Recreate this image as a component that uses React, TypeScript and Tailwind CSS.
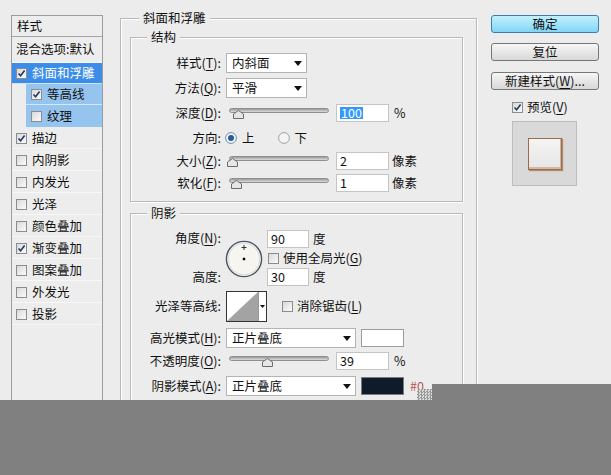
import React from 'react';

const Check = ({ checked = false }: { checked?: boolean }) => (
  <span className="inline-flex w-[11px] h-[11px] shrink-0 items-center justify-center border border-[#8c8c8c] bg-linear-to-br from-[#d9d9d9] to-[#fbfbfb]">
    {checked && (
      <svg width="9" height="9" viewBox="0 0 9 9">
        <path d="M1.5 4.5 L3.6 6.8 L7.6 1.5" fill="none" stroke="#22386a" strokeWidth="1.6" />
      </svg>
    )}
  </span>
);

const Radio = ({ checked = false }: { checked?: boolean }) => (
  <svg width="12" height="12" viewBox="0 0 12 12" className="shrink-0">
    <circle cx="6" cy="6" r="5.4" fill="#f4f4f4" stroke={checked ? '#6d8fb3' : '#a2a2a2'} strokeWidth="1" />
    {checked && <circle cx="6" cy="6" r="3" fill="#2a5b92" />}
  </svg>
);

const Arrow = () => (
  <svg width="8" height="5" viewBox="0 0 8 5" className="shrink-0">
    <path d="M0 0 H8 L4 5 Z" fill="#111" />
  </svg>
);

// access key letter, underlined as in the dialog
const K = ({ children }: { children: React.ReactNode }) => (
  <span className="underline underline-offset-[2px]">{children}</span>
);

const Select = ({ value, w }: { value: string; w: string }) => (
  <div className={`${w} ml-[5px] h-[20px] flex items-center justify-between border border-[#b4b4b4] bg-white pl-[5px] pr-[4px]`}>
    <span>{value}</span>
    <Arrow />
  </div>
);

const Slider = ({ pos }: { pos: string }) => (
  <div className="relative w-[100px] h-[22px] ml-[8px] shrink-0">
    <div className="absolute left-0 right-0 top-[6px] h-[5px] rounded-full border border-[#8e8e8e] bg-linear-to-b from-[#9a9a9a] to-[#dedede]" />
    <svg width="11" height="9" viewBox="0 0 11 9" className={`absolute top-[8px] ${pos}`}>
      <path d="M5.5 0.5 L10.5 4 V8.5 H0.5 V4 Z" fill="#e6e6e6" stroke="#6c6c6c" />
    </svg>
  </div>
);

const Field = ({ children, w = 'w-[53px]' }: { children: React.ReactNode; w?: string }) => (
  <div className={`${w} h-[18px] flex items-center border border-[#c4c4c4] bg-white pl-[3px] shrink-0`}>{children}</div>
);

const Label = ({ children }: { children: React.ReactNode }) => (
  <div className="w-[90px] shrink-0 text-right">{children}</div>
);

const Button = ({ children, primary = false }: { children: React.ReactNode; primary?: boolean }) => (
  <div
    className={`w-[108px] h-[18px] flex items-center justify-center rounded-[3px] border ${
      primary
        ? 'border-[#3d7ca6] bg-linear-to-b from-[#c2f0fd] to-[#80d6f6]'
        : 'border-[#777] bg-linear-to-b from-[#f6f6f6] to-[#d8d8d8]'
    }`}
  >
    {children}
  </div>
);

const styles = [
  { name: '描边', on: true },
  { name: '内阴影', on: false },
  { name: '内发光', on: false },
  { name: '光泽', on: false },
  { name: '颜色叠加', on: false },
  { name: '渐变叠加', on: true },
  { name: '图案叠加', on: false },
  { name: '外发光', on: false },
  { name: '投影', on: false },
];

export default function App() {
  return (
    <div className="relative w-[611px] h-[475px] overflow-hidden bg-[#ececec] text-[12.5px] leading-none text-[#111] font-['Noto_Sans_CJK_SC','Noto_Sans',sans-serif]">
      <div className="flex pt-[15px]">
        {/* style list */}
        <div className="ml-[11px] w-[92px] h-[400px] shrink-0 flex flex-col border border-[#9c9c9c] bg-[#ededed]">
          <div className="h-[21px] flex items-center pl-[5px] border-b border-[#a4a4a4]">样式</div>
          <div className="h-[26px] flex items-center pl-[4px] border-b border-[#f9f9f9]">混合选项:默认</div>
          <div className="h-[21px] flex items-center gap-[5px] pl-[4px] bg-[#3b8de7] text-white border-b border-[#cfe3f6]">
            <Check checked />
            <span>斜面和浮雕</span>
          </div>
          <div className="ml-[14px] h-[21px] flex items-center gap-[5px] pl-[5px] bg-[#95c4ef] border-b border-[#d6e8f8]">
            <Check checked />
            <span>等高线</span>
          </div>
          <div className="ml-[14px] h-[22px] flex items-center gap-[5px] pl-[5px] bg-[#95c4ef]">
            <Check />
            <span>纹理</span>
          </div>
          {styles.map((s) => (
            <div key={s.name} className="h-[22px] flex items-center gap-[5px] pl-[4px] pt-[2px] border-b border-[#f8f8f8]">
              <Check checked={s.on} />
              <span>{s.name}</span>
            </div>
          ))}
        </div>

        {/* bevel & emboss group */}
        <div className="relative ml-[17px] mt-[3px] w-[357px] h-[400px] shrink-0 border border-[#b8b8b8] shadow-[inset_1px_1px_0_#fff,1px_1px_0_#fff]">
          <span className="absolute left-[18px] -top-[7px] px-[4px] bg-[#ececec]">斜面和浮雕</span>

          {/* structure */}
          <div className="relative mt-[18px] ml-[9px] w-[333px] h-[165px] border border-[#b8b8b8] shadow-[inset_1px_1px_0_#fff,1px_1px_0_#fff] pt-[14px]">
            <span className="absolute left-[16px] -top-[7px] px-[4px] bg-[#ececec]">结构</span>
            <div className="flex items-center h-[22px]">
              <Label>样式(<K>T</K>):</Label>
              <Select value="内斜面" w="w-[81px]" />
            </div>
            <div className="flex items-center h-[22px] mt-[3px]">
              <Label>方法(<K>Q</K>):</Label>
              <Select value="平滑" w="w-[81px]" />
            </div>
            <div className="flex items-center h-[22px] mt-[3px]">
              <Label>深度(<K>D</K>):</Label>
              <Slider pos="left-[4px]" />
              <div className="ml-[7px]">
                <Field>
                  <span className="bg-[#3399ff] text-white px-[1px]">100</span>
                </Field>
              </div>
              <span className="ml-[5px]">%</span>
            </div>
            <div className="flex items-center h-[22px] mt-[3px]">
              <Label>方向:</Label>
              <div className="ml-[4px] flex items-center gap-[5px]">
                <Radio checked />
                <span>上</span>
              </div>
              <div className="ml-[23px] flex items-center gap-[5px]">
                <Radio />
                <span>下</span>
              </div>
            </div>
            <div className="flex items-center h-[22px] mt-[1px]">
              <Label>大小(<K>Z</K>):</Label>
              <Slider pos="-left-[2px]" />
              <div className="ml-[7px]">
                <Field>2</Field>
              </div>
              <span className="ml-[3px]">像素</span>
            </div>
            <div className="flex items-center h-[22px]">
              <Label>软化(<K>F</K>):</Label>
              <Slider pos="left-[2px]" />
              <div className="ml-[7px]">
                <Field>1</Field>
              </div>
              <span className="ml-[3px]">像素</span>
            </div>
          </div>

          {/* shading */}
          <div className="relative mt-[11px] ml-[9px] w-[333px] h-[220px] border border-[#b8b8b8] shadow-[inset_1px_1px_0_#fff,1px_1px_0_#fff] pt-[15px]">
            <span className="absolute left-[16px] -top-[7px] px-[4px] bg-[#ececec]">阴影</span>
            <div className="flex items-start">
              <div className="w-[90px] shrink-0 flex flex-col text-right">
                <div className="h-[18px] flex items-center justify-end">角度(<K>N</K>):</div>
                <div className="h-[21px]" />
                <div className="h-[18px] flex items-center justify-end">高度:</div>
              </div>
              <svg width="38" height="38" viewBox="0 0 38 38" className="ml-[4px] mt-[11px] shrink-0">
                <circle cx="19" cy="19" r="17.6" fill="#f6f5ef" stroke="#4b5661" strokeWidth="1.4" />
                <circle cx="19" cy="19" r="15.8" fill="none" stroke="#d4dae2" strokeWidth="1" />
                <rect x="17.8" y="17.8" width="2.4" height="2.4" fill="#000" />
                <path d="M16.5 7.5 H21.5 M19 5 V10" stroke="#333" strokeWidth="1" />
              </svg>
              <div className="ml-[4px] flex flex-col">
                <div className="h-[18px] mt-[1px] flex items-center">
                  <Field w="w-[42px]">90</Field>
                  <span className="ml-[4px]">度</span>
                </div>
                <div className="h-[20px] flex items-center gap-[4px] pl-[1px]">
                  <Check />
                  <span>使用全局光(<K>G</K>)</span>
                </div>
                <div className="h-[18px] flex items-center">
                  <Field w="w-[42px]">30</Field>
                  <span className="ml-[4px]">度</span>
                </div>
              </div>
            </div>

            <div className="flex items-center mt-[5px] h-[31px]">
              <Label>光泽等高线:</Label>
              <div className="ml-[5px] w-[41px] h-[31px] flex border border-[#333] bg-white shrink-0">
                <svg width="31" height="29" viewBox="0 0 31 29" className="shrink-0">
                  <path d="M0 29 L31 0 V29 Z" fill="#a3a3a3" />
                </svg>
                <div className="flex-1 flex items-center justify-center border-l border-[#9a9a9a]">
                  <svg width="5" height="3" viewBox="0 0 5 3">
                    <path d="M0 0 H5 L2.5 3 Z" fill="#111" />
                  </svg>
                </div>
              </div>
              <div className="ml-[15px] flex items-center gap-[4px]">
                <Check />
                <span>消除锯齿(<K>L</K>)</span>
              </div>
            </div>

            <div className="flex items-center mt-[6px] h-[20px]">
              <Label>高光模式(<K>H</K>):</Label>
              <Select value="正片叠底" w="w-[130px]" />
              <div className="ml-[5px] w-[43px] h-[18px] border border-[#9d9d9d] bg-white" />
            </div>

            <div className="flex items-center mt-[2px] h-[22px]">
              <Label>不透明度(<K>O</K>):</Label>
              <Slider pos="left-[33px]" />
              <div className="ml-[7px]">
                <Field>39</Field>
              </div>
              <span className="ml-[5px]">%</span>
            </div>

            <div className="flex items-center mt-[4px] h-[20px]">
              <Label>阴影模式(<K>A</K>):</Label>
              <Select value="正片叠底" w="w-[130px]" />
              <div className="ml-[5px] w-[43px] h-[18px] border border-[#7c7c7c] bg-[#0f1a2b]" />
              <span className="ml-[6px] text-[#b55555]">#0</span>
            </div>
          </div>
        </div>

        {/* buttons */}
        <div className="ml-[14px] w-[108px] shrink-0 flex flex-col">
          <Button primary>确定</Button>
          <div className="mt-[10px]">
            <Button>复位</Button>
          </div>
          <div className="mt-[11px]">
            <Button>
              新建样式(<K>W</K>)...
            </Button>
          </div>
          <div className="mt-[10px] ml-[21px] h-[14px] flex items-center gap-[4px]">
            <Check checked />
            <span>预览(<K>V</K>)</span>
          </div>
          <div className="mt-[7px] ml-[21px] w-[65px] h-[65px] border border-[#bdbdbd] bg-[#d9d9d9] flex justify-center">
            <div className="mt-[16px] w-[34px] h-[32px] border border-[#9a6a4a] bg-linear-to-b from-[#f4f4f4] to-[#e6e6e6] shadow-[inset_-1px_-2px_0_#d2b8a6,1px_1px_1px_#b38c70]" />
          </div>
        </div>
      </div>

      {/* gray cover at the bottom */}
      <div className="absolute left-[417px] top-[389px] w-[15px] h-[11px] bg-[repeating-conic-gradient(#9a9a9a_0_25%,#dcdcdc_0_50%)] bg-[length:3px_3px]" />
      <div className="absolute left-[432px] top-[384px] right-0 h-[16px] bg-[#808080]" />
      <div className="absolute left-0 top-[400px] w-full h-[75px] bg-[#808080]" />
    </div>
  );
}
